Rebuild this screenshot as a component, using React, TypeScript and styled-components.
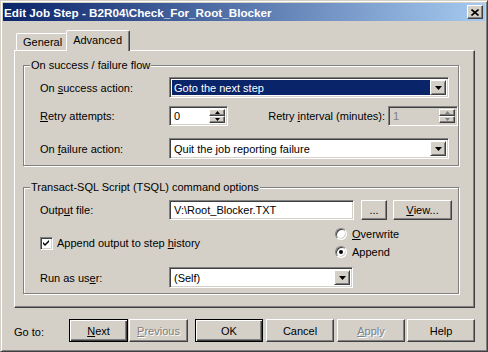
import React from "react";
import styled, { createGlobalStyle, css } from "styled-components";

const FACE = "#d4d0c8";
const SHADOW = "#808080";
const DARK = "#404040";
const HI = "#ffffff";
const SEL = "#0a246a";

const Global = createGlobalStyle`
  html, body { margin: 0; padding: 0; background: ${FACE}; }
  body { font: 11px "Liberation Sans", Arial, sans-serif; color: #000; }
  * { box-sizing: border-box; }
`;

const sunken = css`
  border-style: solid;
  border-width: 1px;
  border-color: ${SHADOW} ${HI} ${HI} ${SHADOW};
  box-shadow: inset 1px 1px 0 ${DARK}, inset -1px -1px 0 ${FACE};
`;

const raised = css`
  border-style: solid;
  border-width: 1px;
  border-color: ${HI} ${DARK} ${DARK} ${HI};
  box-shadow: inset -1px -1px 0 ${SHADOW};
`;

const Window = styled.div`
  width: 488px;
  height: 352px;
  background: ${FACE};
  border: 1px solid;
  border-color: ${FACE} ${DARK} ${DARK} ${FACE};
  box-shadow: inset 1px 1px 0 ${HI}, inset -1px -1px 0 ${SHADOW};
  padding: 2px;
  display: flex;
  flex-direction: column;
`;

const TitleBar = styled.div`
  height: 18px;
  flex: none;
  background: linear-gradient(to right, ${SEL}, #a6caf0);
  display: flex;
  align-items: center;
  justify-content: space-between;
  padding: 0 2px 0 1px;
`;

const Title = styled.div`
  color: #fff;
  font-weight: bold;
  font-size: 11.7px;
  white-space: nowrap;
`;

const CloseBtn = styled.div`
  ${raised};
  width: 16px;
  height: 14px;
  background: ${FACE};
  display: flex;
  align-items: center;
  justify-content: center;
`;

const Body = styled.div`
  flex: 1;
  display: flex;
  flex-direction: column;
  padding: 9px 10px 0 11px;
`;

const TabStrip = styled.div`
  display: flex;
  align-items: flex-end;
  padding-left: 2px;
  height: 20px;
  position: relative;
  z-index: 1;
`;

const Tab = styled.div<{ $active?: boolean }>`
  background: ${FACE};
  border-top: 1px solid ${HI};
  border-left: 1px solid ${HI};
  border-right: 1px solid ${DARK};
  border-top-left-radius: 2px;
  border-top-right-radius: 2px;
  box-shadow: inset -1px 0 0 ${SHADOW};
  display: flex;
  align-items: flex-start;
  justify-content: center;
  ${(p) =>
    p.$active
      ? css`
          height: 21px;
          margin: 0 0 -1px -2px;
          padding: 3px 7px 0 6px;
        `
      : css`
          height: 17px;
          padding: 2px 5px 0 6px;
        `}
`;

const Panel = styled.div`
  height: 258px;
  flex: none;
  border: 1px solid;
  border-color: ${HI} ${DARK} ${DARK} ${HI};
  box-shadow: inset -1px -1px 0 ${SHADOW};
  padding: 8px 0 0 8px;
  display: flex;
  flex-direction: column;
`;

const Group = styled.fieldset<{ $mt?: number }>`
  margin: ${(p) => p.$mt ?? 0}px 0 0 0;
  padding: 0;
  width: 436px;
  border: 1px solid ${SHADOW};
  box-shadow: inset 1px 1px 0 ${HI}, 1px 1px 0 ${HI};
  min-width: 0;
`;

const Legend = styled.legend`
  margin-left: 6px;
  padding: 0 1px;
  line-height: 13px;
  background: ${FACE};
`;

const GroupBody = styled.div<{ $pt: number; $pb: number }>`
  padding: ${(p) => p.$pt}px 0 ${(p) => p.$pb}px 16px;
  display: flex;
  flex-direction: column;
`;

const Row = styled.div<{ $mt?: number; $h: number }>`
  display: flex;
  align-items: center;
  height: ${(p) => p.$h}px;
  margin-top: ${(p) => p.$mt ?? 0}px;
`;

const Label = styled.div<{ $w?: number }>`
  width: ${(p) => p.$w ?? 129}px;
  flex: none;
  white-space: nowrap;
`;

const RightLabel = styled.div`
  flex: 1;
  text-align: right;
  padding-right: 3px;
  white-space: nowrap;
`;

const Mn = styled.span`
  text-decoration: underline;
`;

const Field = styled.div<{ $w: number; $h: number; $disabled?: boolean }>`
  ${sunken};
  width: ${(p) => p.$w}px;
  height: ${(p) => p.$h}px;
  flex: none;
  background: ${(p) => (p.$disabled ? FACE : "#fff")};
  color: ${(p) => (p.$disabled ? SHADOW : "#000")};
  padding: 2px;
  display: flex;
  align-items: stretch;
`;

const FieldText = styled.div<{ $sel?: boolean }>`
  flex: 1;
  display: flex;
  align-items: center;
  padding-left: 2px;
  white-space: nowrap;
  overflow: hidden;
  background: ${(p) => (p.$sel ? SEL : "transparent")};
  color: ${(p) => (p.$sel ? "#fff" : "inherit")};
`;

const DropBtn = styled.div`
  ${raised};
  width: 16px;
  flex: none;
  background: ${FACE};
  box-shadow: inset 1px 1px 0 ${FACE}, inset -1px -1px 0 ${SHADOW};
  display: flex;
  align-items: center;
  justify-content: center;
`;

const SpinCol = styled.div`
  width: 16px;
  flex: none;
  display: flex;
  flex-direction: column;
`;

const SpinBtn = styled.div`
  ${raised};
  flex: 1;
  background: ${FACE};
  display: flex;
  align-items: center;
  justify-content: center;
`;

const Btn = styled.div<{ $w: number; $default?: boolean; $disabled?: boolean; $h?: number }>`
  width: ${(p) => p.$w}px;
  height: ${(p) => p.$h ?? 23}px;
  flex: none;
  background: ${FACE};
  display: flex;
  align-items: center;
  justify-content: center;
  white-space: nowrap;
  color: ${(p) => (p.$disabled ? SHADOW : "#000")};
  text-shadow: ${(p) => (p.$disabled ? `1px 1px 0 ${HI}` : "none")};
  ${(p) =>
    p.$default
      ? css`
          border: 1px solid #000;
          box-shadow: inset 1px 1px 0 ${HI}, inset -1px -1px 0 ${DARK}, inset -2px -2px 0 ${SHADOW};
        `
      : css`
          ${raised};
        `}
`;

const MiddleRow = styled.div`
  display: flex;
  align-items: center;
  height: 34px;
  margin-top: 6px;
`;

const CheckArea = styled.div`
  width: 295px;
  flex: none;
  display: flex;
  align-items: center;
  gap: 4px;
`;

const CheckBox = styled.div`
  ${sunken};
  width: 13px;
  height: 13px;
  background: #fff;
  display: flex;
  align-items: center;
  justify-content: center;
`;

const RadioCol = styled.div`
  display: flex;
  flex-direction: column;
  gap: 2px;
`;

const RadioRow = styled.div`
  height: 16px;
  display: flex;
  align-items: center;
  gap: 5px;
`;

const Radio = styled.div<{ $on?: boolean }>`
  width: 12px;
  height: 12px;
  border-radius: 50%;
  border: 1px solid;
  border-color: ${SHADOW} ${HI} ${HI} ${SHADOW};
  box-shadow: inset 1px 1px 0 ${DARK}, inset -1px -1px 0 ${FACE};
  background: #fff;
  display: flex;
  align-items: center;
  justify-content: center;
  &::after {
    content: "";
    display: ${(p) => (p.$on ? "block" : "none")};
    width: 4px;
    height: 4px;
    border-radius: 50%;
    background: #000;
  }
`;

const ButtonBar = styled.div`
  display: flex;
  align-items: center;
  margin-top: 11px;
  height: 23px;
`;

const GoTo = styled.div`
  width: 55px;
  flex: none;
  padding-top: 2px;
`;

const Gap = styled.div<{ $w: number }>`
  width: ${(p) => p.$w}px;
  flex: none;
`;

const Arrow = ({ disabled }: { disabled?: boolean }) => (
  <svg width="7" height="4" viewBox="0 0 7 4">
    <polygon points="0,0 7,0 3.5,4" fill={disabled ? SHADOW : "#000"} />
  </svg>
);

const SmallArrow = ({ up, disabled }: { up?: boolean; disabled?: boolean }) => (
  <svg width="5" height="3" viewBox="0 0 5 3">
    <polygon points={up ? "0,3 5,3 2.5,0" : "0,0 5,0 2.5,3"} fill={disabled ? SHADOW : "#000"} />
  </svg>
);

const Combo = ({ w, text, sel }: { w: number; text: string; sel?: boolean }) => (
  <Field $w={w} $h={21}>
    <FieldText $sel={sel}>{text}</FieldText>
    <DropBtn>
      <Arrow />
    </DropBtn>
  </Field>
);

const Spin = ({ w, value, disabled }: { w: number; value: string; disabled?: boolean }) => (
  <Field $w={w} $h={20} $disabled={disabled}>
    <FieldText>{value}</FieldText>
    <SpinCol>
      <SpinBtn>
        <SmallArrow up disabled={disabled} />
      </SpinBtn>
      <SpinBtn>
        <SmallArrow disabled={disabled} />
      </SpinBtn>
    </SpinCol>
  </Field>
);

export default function App() {
  return (
    <>
      <Global />
      <Window>
        <TitleBar>
          <Title>Edit Job Step - B2R04\Check_For_Root_Blocker</Title>
          <CloseBtn>
            <svg width="8" height="7" viewBox="0 0 8 7">
              <path d="M0.5 0.5 L7.5 6.5 M7.5 0.5 L0.5 6.5" stroke="#000" strokeWidth="1.6" />
            </svg>
          </CloseBtn>
        </TitleBar>
        <Body>
          <TabStrip>
            <Tab>General</Tab>
            <Tab $active>Advanced</Tab>
          </TabStrip>
          <Panel>
            <Group>
              <Legend>On success / failure flow</Legend>
              <GroupBody $pt={5} $pb={6}>
                <Row $h={21}>
                  <Label>
                    On <Mn>s</Mn>uccess action:
                  </Label>
                  <Combo w={280} text="Goto the next step" sel />
                </Row>
                <Row $h={20} $mt={8}>
                  <Label>
                    <Mn>R</Mn>etry attempts:
                  </Label>
                  <Spin w={59} value="0" />
                  <RightLabel>
                    Retry <Mn>i</Mn>nterval (minutes):
                  </RightLabel>
                  <Spin w={70} value="1" disabled />
                </Row>
                <Row $h={21} $mt={12}>
                  <Label>
                    On <Mn>f</Mn>ailure action:
                  </Label>
                  <Combo w={280} text="Quit the job reporting failure" />
                </Row>
              </GroupBody>
            </Group>
            <Group $mt={15}>
              <Legend>Transact-SQL Script (TSQL) command options</Legend>
              <GroupBody $pt={6} $pb={5}>
                <Row $h={20}>
                  <Label>
                    Outp<Mn>u</Mn>t file:
                  </Label>
                  <Field $w={185} $h={20}>
                    <FieldText>V:\Root_Blocker.TXT</FieldText>
                  </Field>
                  <Gap $w={7} />
                  <Btn $w={26} $h={20}>
                    ...
                  </Btn>
                  <Gap $w={6} />
                  <Btn $w={59} $h={20}>
                    <Mn>V</Mn>iew...
                  </Btn>
                </Row>
                <MiddleRow>
                  <CheckArea>
                    <CheckBox>
                      <svg width="7" height="7" viewBox="0 0 7 7">
                        <path d="M0 2 L2 4 L6 0 L6 2 L2 6 L0 4 Z" fill="#000" />
                      </svg>
                    </CheckBox>
                    <span>
                      Append output to step <Mn>h</Mn>istory
                    </span>
                  </CheckArea>
                  <RadioCol>
                    <RadioRow>
                      <Radio />
                      <span>
                        <Mn>O</Mn>verwrite
                      </span>
                    </RadioRow>
                    <RadioRow>
                      <Radio $on />
                      <span>Append</span>
                    </RadioRow>
                  </RadioCol>
                </MiddleRow>
                <Row $h={21} $mt={7}>
                  <Label>
                    Run as us<Mn>e</Mn>r:
                  </Label>
                  <Combo w={184} text="(Self)" />
                </Row>
              </GroupBody>
            </Group>
          </Panel>
          <ButtonBar>
            <GoTo>Go to:</GoTo>
            <Btn $w={59} $default>
              <Mn>N</Mn>ext
            </Btn>
            <Gap $w={1} />
            <Btn $w={59} $disabled>
              <Mn>P</Mn>revious
            </Btn>
            <Gap $w={7} />
            <Btn $w={68} $default>
              OK
            </Btn>
            <Gap $w={3} />
            <Btn $w={68}>Cancel</Btn>
            <Gap $w={3} />
            <Btn $w={68} $disabled>
              <Mn>A</Mn>pply
            </Btn>
            <Gap $w={2} />
            <Btn $w={68}>Help</Btn>
          </ButtonBar>
        </Body>
      </Window>
    </>
  );
}
